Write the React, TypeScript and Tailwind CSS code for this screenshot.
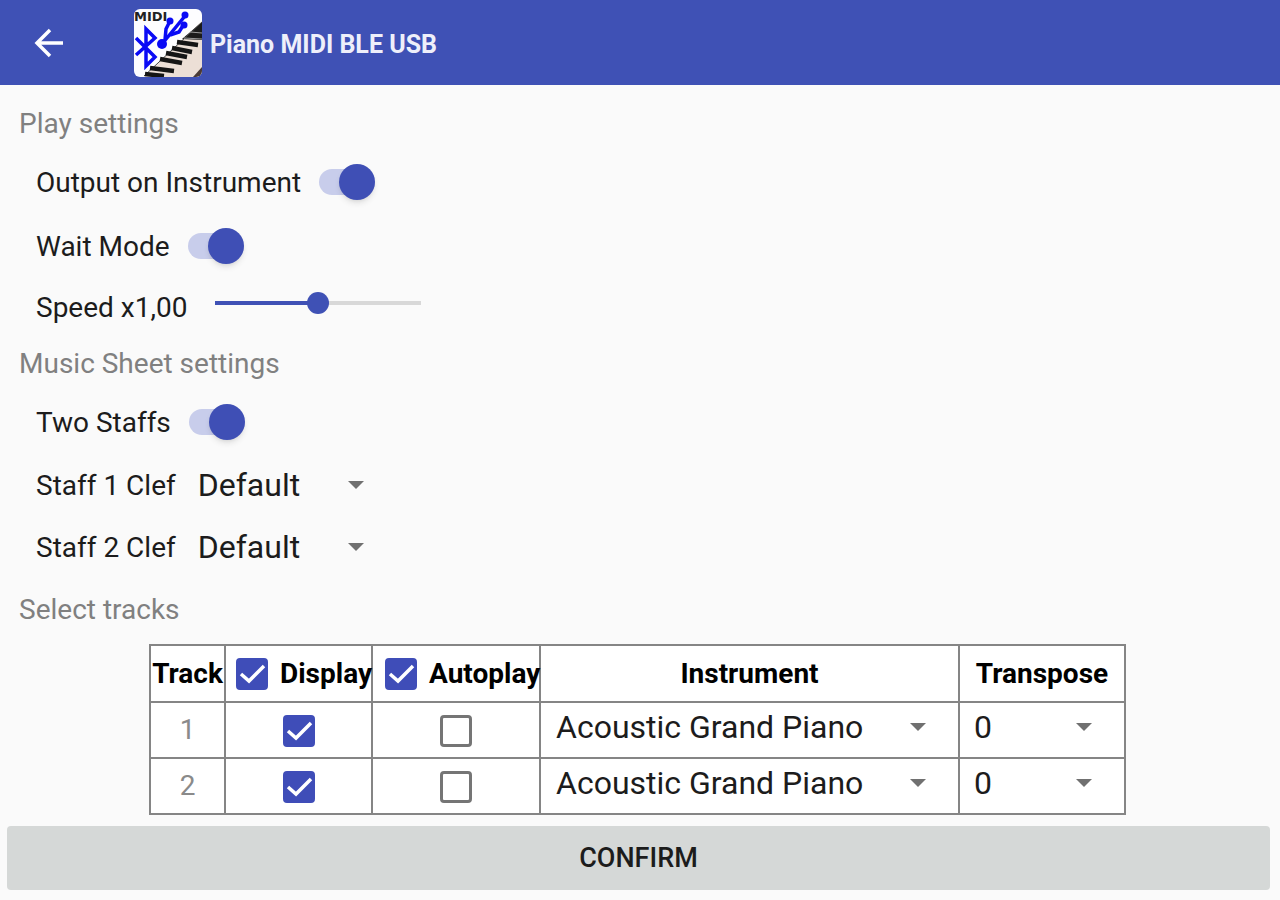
import { useState } from "react";

const CLEFS = ["Default", "Treble", "Bass"];
const INSTRUMENTS = ["Acoustic Grand Piano", "Bright Acoustic Piano", "Electric Piano"];
const TRANSPOSES = ["0", "1", "2", "3", "-1", "-2", "-3"];
const TRACKS = [1, 2];

function AppLogo() {
  return (
    <svg viewBox="0 0 68 68" className="size-[68px] shrink-0 rounded-md" aria-hidden="true">
      <rect width="68" height="68" fill="#fdfdff" />
      <path d="M68 12 L68 68 L10 68 Z" fill="#ecdfd6" />
      <path d="M68 13 L68 31 L48 30 Z" fill="#1b1b1b" />
      <path d="M68 13 L10 67" stroke="#444" strokeWidth="1" />
      <g stroke="#151515" strokeWidth="4.5" fill="none">
        <path d="M43 33 L64 36" />
        <path d="M38 39 L58 43" />
        <path d="M32 44 L53 48" />
        <path d="M26 50 L48 54" />
        <path d="M16 59 L40 62" />
        <path d="M11 65 L30 67" />
      </g>
      <path d="M56 23 L68 24 M50 29 L68 30" stroke="#9a9a9a" strokeWidth="1" />
      <path d="M59 68 L68 58 L68 68 Z" fill="#4a3a36" />
      <g stroke="#0a0af5" strokeWidth="3.5" fill="none">
        <path d="M2 29 L21 48 L12 57 L12 20 L21 29 L2 46" />
        <path d="M28 35 L51 7" />
        <path d="M31 31 L32 20 L36 12" />
        <path d="M36 26 L45 23 L50 15" />
      </g>
      <g fill="#0a0af5">
        <circle cx="28" cy="35" r="5" />
        <circle cx="36" cy="12" r="3.5" />
        <circle cx="51" cy="6" r="3.5" />
        <circle cx="50" cy="16" r="3.5" />
      </g>
      <text x="0" y="12" fontSize="13" fontWeight="700" fontFamily="DejaVu Sans, sans-serif" fill="#222">
        MIDI
      </text>
    </svg>
  );
}

function Arrow() {
  return (
    <svg viewBox="0 0 16 8" className="pointer-events-none h-2 w-4 shrink-0 fill-[#707070]" aria-hidden="true">
      <path d="M0 0h16L8 8z" />
    </svg>
  );
}

type SwitchRowProps = {
  id: string;
  label: string;
};

function SwitchRow({ id, label }: SwitchRowProps) {
  return (
    <div className="flex h-16 items-center gap-[18px] pl-9">
      <label htmlFor={id}>{label}</label>
      <input
        id={id}
        type="checkbox"
        role="switch"
        defaultChecked
        className="relative mb-[2px] h-9 w-14 appearance-none before:absolute before:inset-x-0 before:top-[5px] before:h-[26px] before:rounded-full before:bg-gray-300 after:absolute after:left-0 after:top-0 after:size-9 after:rounded-full after:bg-gray-100 after:shadow-md checked:before:bg-[#c8cdeb] checked:after:left-5 checked:after:bg-[#3f4fb5]"
      />
    </div>
  );
}

type PickerProps = {
  id: string;
  label?: string;
  options: string[];
  className: string;
};

function Picker({ id, label, options, className }: PickerProps) {
  return (
    <div className={`flex items-center ${className}`}>
      <select id={id} aria-label={label} className="-mr-4 h-12 w-full appearance-none bg-transparent text-[32px] leading-10 text-[#1c1c1c]">
        {options.map((option) => (
          <option key={option}>{option}</option>
        ))}
      </select>
      <Arrow />
    </div>
  );
}

function ClefRow({ id, label }: SwitchRowProps) {
  return (
    <div className="flex h-[62px] items-center gap-[22px] pl-9">
      <label htmlFor={id}>{label}</label>
      <Picker id={id} options={CLEFS} className="w-[166px] pb-[2px]" />
    </div>
  );
}

type TickProps = {
  id?: string;
  label?: string;
  checked?: boolean;
};

function Tick({ id, label, checked = false }: TickProps) {
  return (
    <span className="relative inline-flex shrink-0 align-middle">
      <input
        id={id}
        aria-label={label}
        type="checkbox"
        defaultChecked={checked}
        className="peer size-8 appearance-none rounded border-3 border-[#757575] checked:border-[#3f4db8] checked:bg-[#3f4db8]"
      />
      <svg
        viewBox="0 0 32 32"
        className="pointer-events-none absolute inset-0 hidden size-8 fill-none stroke-white stroke-[3.5] peer-checked:block"
        aria-hidden="true"
      >
        <path d="M5 16l8 7L28 8" />
      </svg>
    </span>
  );
}

function SectionTitle({ children }: { children: string }) {
  return <h2 className="flex h-[54px] items-center pl-[19px] text-[#808080]">{children}</h2>;
}

export default function App() {
  const [speed, setSpeed] = useState(100);
  const fill = `linear-gradient(to right, #3f51b5 ${speed / 2}%, #d8d8d8 ${speed / 2}%)`;

  return (
    <div className="min-h-screen bg-[#fafafa] font-['Roboto',sans-serif] text-[28px] leading-8 text-[#1c1c1c]">
      <header className="flex h-[85px] items-center bg-[#3f51b5] pl-[34px] text-white">
        <button type="button" aria-label="Back" className="mr-[70px]">
          <svg viewBox="0 0 30 30" className="size-[30px] fill-none stroke-white stroke-[3.5]">
            <path d="M29 15H4M16 2L3 15l13 13" />
          </svg>
        </button>
        <AppLogo />
        <h1 className="ml-2 pt-1 text-[25px] font-bold text-[#eeeffa]">Piano MIDI BLE USB</h1>
      </header>

      <main className="pt-3">
        <section>
          <SectionTitle>Play settings</SectionTitle>
          <SwitchRow id="output" label="Output on Instrument" />
          <SwitchRow id="wait" label="Wait Mode" />
          <div className="flex h-[58px] items-center gap-7 pl-9">
            <label htmlFor="speed">Speed x{(speed / 100).toFixed(2).replace(".", ",")}</label>
            <input
              id="speed"
              type="range"
              min={0}
              max={200}
              value={speed}
              onChange={(event) => setSpeed(Number(event.target.value))}
              style={{ background: fill }}
              className="mb-[10px] h-1 w-[206px] appearance-none [&::-webkit-slider-thumb]:size-[22px] [&::-webkit-slider-thumb]:appearance-none [&::-webkit-slider-thumb]:rounded-full [&::-webkit-slider-thumb]:bg-[#3f51b5]"
            />
          </div>
        </section>

        <section>
          <SectionTitle>Music Sheet settings</SectionTitle>
          <SwitchRow id="staffs" label="Two Staffs" />
          <ClefRow id="clef1" label="Staff 1 Clef" />
          <ClefRow id="clef2" label="Staff 2 Clef" />
        </section>

        <section className="pt-1">
          <SectionTitle>Select tracks</SectionTitle>
          <div className="pt-[7px] pr-[5px]">
            <table className="mx-auto w-[976px] table-fixed border-collapse bg-white [&_td]:border-2 [&_td]:border-[#858585] [&_th]:border-2 [&_th]:border-[#858585]">
              <colgroup>
                <col className="w-[75px]" />
                <col className="w-[147px]" />
                <col className="w-[168px]" />
                <col className="w-[419px]" />
                <col className="w-[166px]" />
              </colgroup>
              <thead>
                <tr className="h-[57px] text-black">
                  <th className="p-0">Track</th>
                  <th className="p-0">
                    <div className="flex items-center gap-3 pl-[10px]">
                      <Tick id="display-all" checked />
                      <label htmlFor="display-all">Display</label>
                    </div>
                  </th>
                  <th className="p-0">
                    <div className="flex items-center gap-3 pl-3">
                      <Tick id="autoplay-all" checked />
                      <label htmlFor="autoplay-all">Autoplay</label>
                    </div>
                  </th>
                  <th className="p-0">Instrument</th>
                  <th className="p-0">Transpose</th>
                </tr>
              </thead>
              <tbody>
                {TRACKS.map((track) => (
                  <tr key={track} className="h-14 text-center">
                    <td className="p-0 text-[#8a8a8a]">{track}</td>
                    <td className="p-0">
                      <Tick label={`Display track ${track}`} checked />
                    </td>
                    <td className="p-0">
                      <Tick label={`Autoplay track ${track}`} />
                    </td>
                    <td className="p-0">
                      <Picker
                        id={`instrument${track}`}
                        label={`Instrument of track ${track}`}
                        options={INSTRUMENTS}
                        className="pr-8 pb-[6px] pl-[15px]"
                      />
                    </td>
                    <td className="p-0">
                      <Picker
                        id={`transpose${track}`}
                        label={`Transpose of track ${track}`}
                        options={TRANSPOSES}
                        className="pr-8 pb-[6px] pl-[14px]"
                      />
                    </td>
                  </tr>
                ))}
              </tbody>
            </table>
          </div>
          <div className="pt-[11px] pr-[10px] pl-[7px]">
            <button
              type="button"
              className="h-16 w-full rounded-sm bg-[#d5d8d7] text-[27px] font-medium text-[#1c1c1c]"
            >
              CONFIRM
            </button>
          </div>
        </section>
      </main>
    </div>
  );
}
